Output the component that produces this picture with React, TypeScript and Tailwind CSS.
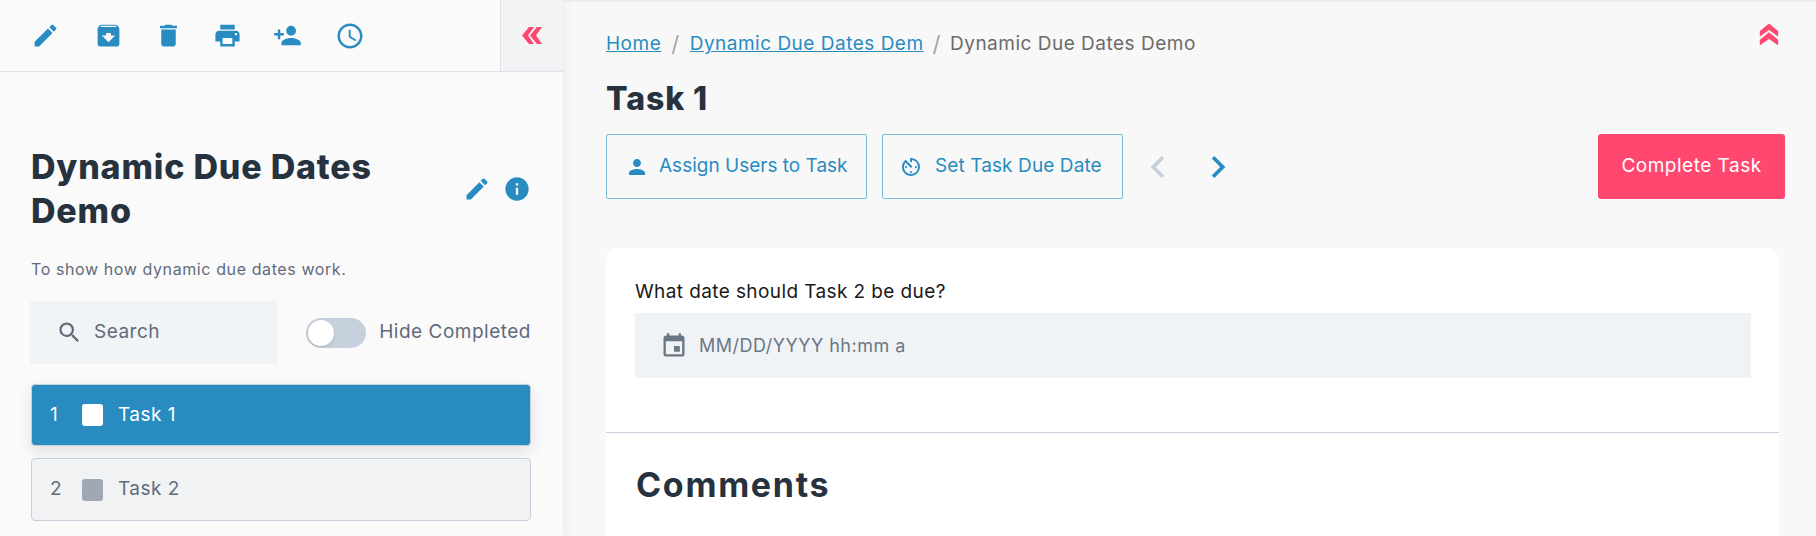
import {
  MdAccessTime,
  MdArchive,
  MdAvTimer,
  MdChevronLeft,
  MdChevronRight,
  MdDelete,
  MdEdit,
  MdEvent,
  MdInfo,
  MdPerson,
  MdPersonAdd,
  MdPrint,
  MdSearch,
} from "react-icons/md";

const toolbarIcons = [
  { Icon: MdEdit, size: 29, gap: "" },
  { Icon: MdArchive, size: 29, gap: "ml-[34px]" },
  { Icon: MdDelete, size: 29, gap: "ml-[31px]" },
  { Icon: MdPrint, size: 29, gap: "ml-[30px]" },
  { Icon: MdPersonAdd, size: 29, gap: "ml-[31px]" },
  { Icon: MdAccessTime, size: 30, gap: "ml-[33px]" },
];

function TaskRow({ index, name, active }: { index: number; name: string; active?: boolean }) {
  return (
    <div
      className={
        active
          ? "flex h-[62px] items-center rounded border border-[#c5d0dc] bg-[#288cc0] pl-[18px] text-white shadow-[0_6px_16px_rgba(0,0,0,0.1)]"
          : "flex h-[63px] items-center rounded border border-[#c5d0dc] bg-[#f1f2f4] pl-[18px] text-[#5f6b7a]"
      }
    >
      <span className="w-[32px] text-[19px]">{index}</span>
      <span className={active ? "h-[22px] w-[21px] rounded-[3px] bg-white" : "h-[22px] w-[21px] rounded-[3px] bg-[#a0a9b3]"} />
      <span className="ml-[15px] text-[19px] tracking-[0.5px]">{name}</span>
    </div>
  );
}

// thick double chevron, the icon packages only have thin ones
function DoubleChevron({ className }: { className: string }) {
  return (
    <svg viewBox="0 0 20 17" className={className} fill="currentColor">
      <polygon points="7,0 12,0 6,8.5 12,17 7,17 0,8.5" />
      <polygon points="15,0 20,0 14,8.5 20,17 15,17 8,8.5" />
    </svg>
  );
}

export default function App() {
  return (
    <div className="flex h-screen overflow-hidden bg-[#f8f8f8] font-['Inter','Liberation_Sans',sans-serif] shadow-[inset_0_3px_3px_-2px_rgba(0,0,0,0.08)]">
      <aside className="h-full w-[563px] shrink-0 bg-[#fafafa] shadow-[2px_0_10px_rgba(0,0,0,0.06)]">
        <div className="flex h-[72px] items-center justify-between border-b border-[#dfe3e8]">
          <div className="flex items-center pl-[31px] text-[#288cc0]">
            {toolbarIcons.map(({ Icon, size, gap }, i) => (
              <Icon key={i} size={size} className={gap} />
            ))}
          </div>
          <button className="flex h-full w-[63px] items-center justify-center border-l border-[#dfe3e8] bg-[#f1f3f5] text-[#ff476f]">
            <DoubleChevron className="h-[17px] w-[20px]" />
          </button>
        </div>

        <div className="pl-[31px] pr-[32px] pt-[73px]">
          <div className="flex items-center justify-between">
            <h1 className="w-[400px] text-[34px] font-extrabold leading-[44px] tracking-[0.8px] text-[#27323f]">Dynamic Due Dates Demo</h1>
            <div className="flex items-center gap-[12px] text-[#288cc0]">
              <MdEdit size={28} />
              <MdInfo size={28} />
            </div>
          </div>
          <p className="mt-[24px] text-[16px] tracking-[0.6px] text-[#5f6b7a]">To show how dynamic due dates work.</p>

          <div className="mt-[20px] flex items-center justify-between">
            <div className="-ml-[1px] flex h-[63px] w-[248px] items-center gap-[11px] bg-[#f1f4f7] pl-[26px] text-[19px] tracking-[0.5px] text-[#5f6b7a]">
              <MdSearch size={27} />
              Search
            </div>
            <div className="flex items-center gap-[13px]">
              <span className="flex h-[30px] w-[60px] items-center rounded-full bg-[#c5d0dc] pl-[2px]">
                <span className="h-[26px] w-[26px] rounded-full bg-white shadow-sm" />
              </span>
              <span className="text-[19px] tracking-[0.5px] text-[#5f6b7a]">Hide Completed</span>
            </div>
          </div>

          <div className="mt-[20px] flex flex-col gap-[12px]">
            <TaskRow index={1} name="Task 1" active />
            <TaskRow index={2} name="Task 2" />
          </div>
        </div>
      </aside>

      <main className="flex min-w-0 flex-1 flex-col pl-[43px] pr-[31px]">
        <div className="flex h-[57px] items-start justify-between pt-[30px]">
          <nav className="flex h-[28px] items-center text-[19px] leading-[28px] tracking-[0.5px] text-[#6b6b6b]">
            <a className="text-[#288cc0] underline">Home</a>
            <span className="mx-[10px] text-[22px] leading-none text-[#9aa7b5]">/</span>
            <a className="text-[#288cc0] underline">Dynamic Due Dates Dem</a>
            <span className="mx-[9px] text-[22px] leading-none text-[#9aa7b5]">/</span>
            <span>Dynamic Due Dates Demo</span>
          </nav>
          <DoubleChevron className="-mt-[5px] mr-[5px] h-[19px] w-[22px] rotate-90 text-[#ff476f]" />
        </div>

        <h2 className="mt-[20px] text-[32px] font-extrabold leading-[44px] tracking-[0.9px] text-[#27323f]">Task 1</h2>

        <div className="mt-[13px] flex h-[65px] items-center">
          <button className="flex h-full w-[261px] items-center gap-[10px] rounded-[2px] border border-[#7fbde0] pl-[18px] text-[19px] text-[#288cc0]">
            <MdPerson size={24} />
            Assign Users to Task
          </button>
          <button className="ml-[15px] flex h-full w-[241px] items-center gap-[12px] rounded-[2px] border border-[#7fbde0] pl-[16px] text-[19px] tracking-[0.1px] text-[#288cc0]">
            <MdAvTimer size={24} />
            Set Task Due Date
          </button>
          <MdChevronLeft size={44} className="ml-[13px] text-[#c5d0dc]" />
          <MdChevronRight size={44} className="ml-[16px] text-[#288cc0]" />
          <button className="ml-auto h-full w-[187px] rounded-[3px] bg-[#ff476f] text-[19px] tracking-[0.5px] text-white">Complete Task</button>
        </div>

        <section className="mt-[49px] mr-[6px] flex-1 rounded-t-[12px] bg-white pt-[30px]">
          <div className="pb-[54px] pl-[29px] pr-[28px]">
            <label className="block text-[19px] leading-[28px] tracking-[0.4px] text-[#1a1a1a]">What date should Task 2 be due?</label>
            <div className="mt-[7px] flex h-[65px] items-center gap-[11px] bg-[#f0f3f6] pl-[25px] text-[18px] tracking-[0.5px] text-[#6b7785]">
              <MdEvent size={28} />
              MM/DD/YYYY hh:mm a
            </div>
          </div>
          <div className="border-t border-[#c8d3e0] pl-[30px] pt-[30px]">
            <h3 className="text-[34px] font-bold leading-[44px] tracking-[1.7px] text-[#27323f]">Comments</h3>
          </div>
        </section>
      </main>
    </div>
  );
}
